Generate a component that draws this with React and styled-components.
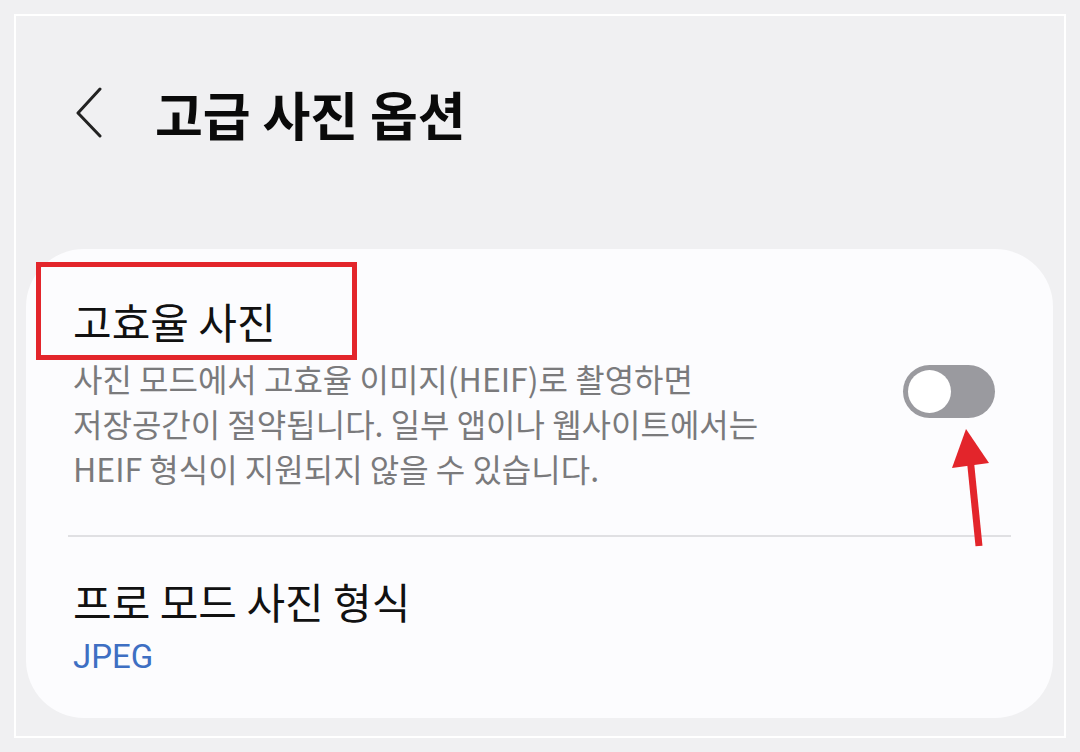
import React from 'react';
import styled, { createGlobalStyle } from 'styled-components';

const GlobalStyle = createGlobalStyle`
    html, body {
        margin: 0;
        padding: 0;
        background: #f0f0f2;
        font-family: "Noto Sans CJK KR", "Noto Sans", sans-serif;
    }
`;

const Frame = styled.div`
    box-sizing: border-box;
    margin: 14px;
    width: 1052px;
    height: 724px;
    border: 2px solid #ffffff;
    display: flex;
    flex-direction: column;
`;

const Header = styled.header`
    display: flex;
    align-items: center;
    height: 194px;
    padding-left: 60px;
    box-sizing: border-box;
    gap: 49px;
`;

const Title = styled.h1`
    margin: 0;
    font-size: 52px;
    font-weight: 700;
    color: #0a0a0a;
`;

const Card = styled.section`
    position: relative;
    margin: 39px 0 0 10px;
    width: 1027px;
    height: 469px;
    box-sizing: border-box;
    background: #fcfcfe;
    border-radius: 58px;
    padding: 0 42px;
`;

const Item = styled.div`
    display: flex;
    align-items: center;
    padding: ${p => p.$top}px 0 ${p => p.$bottom}px 5px;
    border-bottom: ${p => (p.$divider ? '2px solid #e0e0e3' : 'none')};
`;

const Texts = styled.div`
    flex: 1;
`;

const ItemTitle = styled.div`
    position: relative;
    font-size: 42px;
    line-height: 52px;
    color: #111;
    display: inline-block;

    &::before {
        content: ${p => (p.$marked ? "''" : 'none')};
        position: absolute;
        left: -37px;
        top: -33px;
        width: 311px;
        height: 88px;
        border: 5px solid #e3252b;
    }
`;

const Description = styled.p`
    margin: 9px 0 0;
    width: 720px;
    font-size: 32px;
    line-height: 45px;
    color: #7a7a7c;
    word-break: keep-all;
`;

const Value = styled.div`
    margin-top: 8px;
    font-size: 33px;
    line-height: 44px;
    color: #3e6fc3;
    font-family: "Roboto", "Noto Sans", sans-serif;
`;

const Track = styled.div`
    width: 92px;
    height: 53px;
    border-radius: 27px;
    background: #9a9a9f;
    padding: 5px;
    box-sizing: border-box;
    margin-right: 16px;
    margin-top: -3px;
`;

const Knob = styled.div`
    width: 43px;
    height: 43px;
    border-radius: 50%;
    background: #ffffff;
`;

const Arrow = styled.svg`
    position: absolute;
    left: 924px;
    top: 176px;
`;

const Chevron = () => (
    <svg width="30" height="54" viewBox="0 0 30 54">
        <polyline points="24,3 2,27 24,50" fill="none" stroke="#222" strokeWidth="3" strokeLinecap="round" strokeLinejoin="round" />
    </svg>
);

const App = () => (
    <>
        <GlobalStyle />
        <Frame>
            <Header>
                <Chevron />
                <Title>고급 사진 옵션</Title>
            </Header>
            <Card>
                <Item $top={46} $bottom={44} $divider>
                    <Texts>
                        <ItemTitle $marked>고효율 사진</ItemTitle>
                        <Description>
                            사진 모드에서 고효율 이미지(HEIF)로 촬영하면 저장공간이 절약됩니다. 일부 앱이나 웹사이트에서는 HEIF 형식이 지원되지 않을 수 있습니다.
                        </Description>
                    </Texts>
                    <Track>
                        <Knob />
                    </Track>
                </Item>
                <Item $top={38} $bottom={0}>
                    <Texts>
                        <ItemTitle>프로 모드 사진 형식</ItemTitle>
                        <Value>JPEG</Value>
                    </Texts>
                </Item>
                <Arrow width="45" height="125" viewBox="0 0 45 125">
                    <line x1="20" y1="32" x2="29" y2="121" stroke="#e3252b" strokeWidth="7" />
                    <polygon points="16,4 2,43 39,38" fill="#e3252b" />
                </Arrow>
            </Card>
        </Frame>
    </>
);

export default App;
